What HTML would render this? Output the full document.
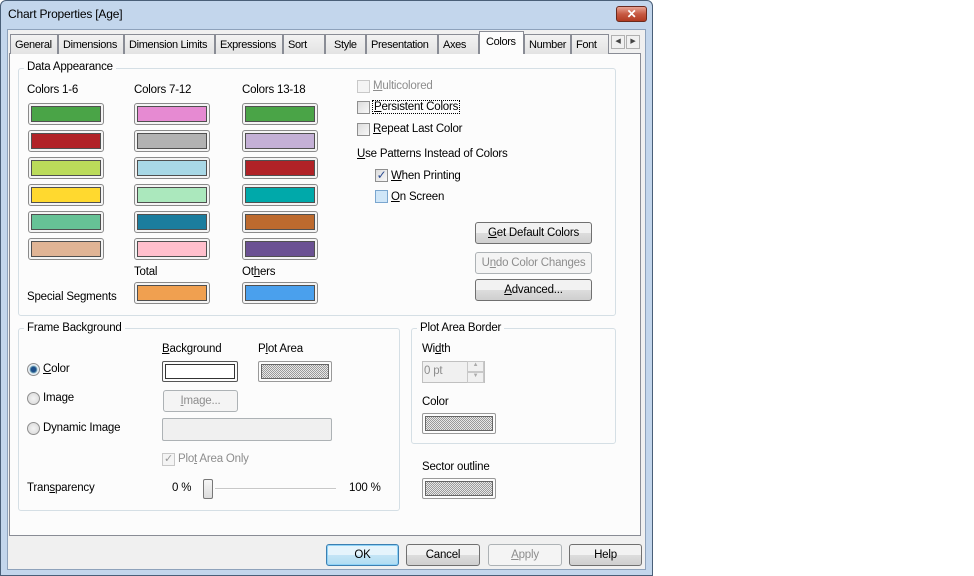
<!DOCTYPE html>
<html><head><style>
*{box-sizing:border-box}
body{margin:0;width:974px;height:576px;background:#fff;position:relative;overflow:hidden;font-family:"Liberation Sans",sans-serif;font-size:11.5px;letter-spacing:-0.2px;color:#000}
.a{position:absolute}
.win{left:0;top:0;width:653px;height:576px;background:#c3d6ec;border:1px solid #4a5f78;border-radius:6px 6px 0 0}
.body{left:7px;top:29px;width:639px;height:541px;background:#f0f0f0;border:1px solid #8ea2bb}
.panel{left:9px;top:53px;width:632px;height:483px;background:#fcfcfc;border:1px solid #898c95}
.tab{top:34px;height:20px;border:1px solid #898c95;border-bottom:none;background:linear-gradient(#f2f2f2,#e3e3e3);padding:4px 0 0 4px;white-space:nowrap;font-size:11px;letter-spacing:-0.35px;overflow:hidden}
.grp{border:1px solid #d5dfe5;border-radius:3px}
.lg{background:#fcfcfc;padding:0 3px}
.sw{width:76px;height:22px;border:1px solid #8a8a8a;border-radius:3px;background:#f4f4f4;padding:2px}
.sw div{width:100%;height:100%;border:1px solid #505050}
.cb{width:13px;height:13px;border:1px solid #8f8f8f;background:linear-gradient(135deg,#dcdcdc,#f8f8f8)}
.btn{height:22px;border:1px solid #707070;border-radius:3px;background:linear-gradient(#f2f2f2 50%,#dddddd 50%,#cfcfcf);text-align:center;line-height:20px}
.dis{color:#8d8d8d;border-color:#adb2b5;background:#f4f4f4}
.rad{width:13px;height:13px;border-radius:50%;border:1px solid #8f8f8f;background:radial-gradient(#f4f4f4,#d6d6d6)}
.hatch{background:repeating-conic-gradient(#9a9a9a 0 25%,#e8e8e8 0 50%) 0 0/2px 2px}
u{text-decoration:underline}
</style></head><body>
<div class="a win"></div>
<div class="a" style="left:8px;top:7px;font-size:12px">Chart Properties [Age]</div>
<div class="a" style="left:616px;top:6px;width:31px;height:16px;border:1px solid #6b2a1e;border-radius:3px;background:linear-gradient(#e8a493,#c75a43 50%,#b13b22);color:#fff;font-weight:bold;text-align:center;line-height:14px;font-size:12px">✕</div>
<div class="a body"></div>
<div class="a panel"></div>
<div class="a tab" style="left:10px;width:48px">General</div>
<div class="a tab" style="left:58px;width:66px">Dimensions</div>
<div class="a tab" style="left:124px;width:91px">Dimension Limits</div>
<div class="a tab" style="left:215px;width:68px">Expressions</div>
<div class="a tab" style="left:283px;width:42px">Sort</div>
<div class="a tab" style="left:325px;width:41px;padding-left:8px">Style</div>
<div class="a tab" style="left:366px;width:72px">Presentation</div>
<div class="a tab" style="left:438px;width:41px">Axes</div>
<div class="a tab" style="left:479px;top:31px;height:23px;width:45px;background:#fcfcfc;padding-left:6px">Colors</div>
<div class="a tab" style="left:524px;width:47px">Number</div>
<div class="a tab" style="left:571px;width:38px">Font</div>
<div class="a" style="left:611px;top:35px;width:14px;height:14px;border:1px solid #b0b0b0;font-size:7px;text-align:center;line-height:12px;color:#444">◀</div>
<div class="a" style="left:626px;top:35px;width:14px;height:14px;border:1px solid #b0b0b0;font-size:7px;text-align:center;line-height:12px;color:#444">▶</div>

<div class="a grp" style="left:18px;top:68px;width:598px;height:248px"></div>
<div class="a lg" style="left:24px;top:61px">Data Appearance</div>
<div class="a" style="left:27px;top:84px">Colors 1-6</div>
<div class="a" style="left:134px;top:84px">Colors 7-12</div>
<div class="a" style="left:242px;top:84px">Colors 13-18</div>

<div class="a sw" style="left:28px;top:103px"><div style="background:#4aa447"></div></div>
<div class="a sw" style="left:28px;top:130px"><div style="background:#b12227"></div></div>
<div class="a sw" style="left:28px;top:157px"><div style="background:#bbdb5a"></div></div>
<div class="a sw" style="left:28px;top:184px"><div style="background:#ffd92f"></div></div>
<div class="a sw" style="left:28px;top:211px"><div style="background:#66c296"></div></div>
<div class="a sw" style="left:28px;top:238px"><div style="background:#e0b495"></div></div>
<div class="a sw" style="left:134px;top:103px"><div style="background:#e68ad2"></div></div>
<div class="a sw" style="left:134px;top:130px"><div style="background:#b2b2b2"></div></div>
<div class="a sw" style="left:134px;top:157px"><div style="background:#a8d8e6"></div></div>
<div class="a sw" style="left:134px;top:184px"><div style="background:#abe8bd"></div></div>
<div class="a sw" style="left:134px;top:211px"><div style="background:#1b7d9e"></div></div>
<div class="a sw" style="left:134px;top:238px"><div style="background:#ffbfcc"></div></div>
<div class="a sw" style="left:242px;top:103px"><div style="background:#4aa447"></div></div>
<div class="a sw" style="left:242px;top:130px"><div style="background:#c4b0d6"></div></div>
<div class="a sw" style="left:242px;top:157px"><div style="background:#b12227"></div></div>
<div class="a sw" style="left:242px;top:184px"><div style="background:#00a9aa"></div></div>
<div class="a sw" style="left:242px;top:211px"><div style="background:#bd6a2e"></div></div>
<div class="a sw" style="left:242px;top:238px"><div style="background:#6b5193"></div></div>
<div class="a" style="left:134px;top:266px">Total</div>
<div class="a" style="left:242px;top:266px">Ot<u>h</u>ers</div>
<div class="a" style="left:27px;top:291px">Special Segments</div>
<div class="a sw" style="left:134px;top:282px"><div style="background:#f0a050"></div></div>
<div class="a sw" style="left:242px;top:282px"><div style="background:#4aa0ed"></div></div>

<div class="a cb" style="left:357px;top:80px;border-color:#c8c8c8;background:#f4f4f4"></div>
<div class="a" style="left:373px;top:80px;color:#8d8d8d"><u>M</u>ulticolored</div>
<div class="a cb" style="left:357px;top:101px"></div>
<div class="a" style="left:372px;top:100px;border:1px dotted #000;padding:0 1px"><u>P</u>ersistent Colors</div>
<div class="a cb" style="left:357px;top:123px"></div>
<div class="a" style="left:373px;top:123px"><u>R</u>epeat Last Color</div>
<div class="a" style="left:357px;top:148px"><u>U</u>se Patterns Instead of Colors</div>
<div class="a cb" style="left:375px;top:169px;font-size:12px;line-height:10px;color:#2a4a90;text-align:center">✓</div>
<div class="a" style="left:391px;top:170px"><u>W</u>hen Printing</div>
<div class="a cb" style="left:375px;top:190px;border-color:#7aa6cf;background:#cfe6f8"></div>
<div class="a" style="left:391px;top:191px"><u>O</u>n Screen</div>
<div class="a btn" style="left:475px;top:222px;width:117px"><u>G</u>et Default Colors</div>
<div class="a btn dis" style="left:475px;top:252px;width:117px">U<u>n</u>do Color Changes</div>
<div class="a btn" style="left:475px;top:279px;width:117px"><u>A</u>dvanced...</div>

<div class="a grp" style="left:18px;top:328px;width:382px;height:183px"></div>
<div class="a lg" style="left:24px;top:322px">Frame Background</div>
<div class="a" style="left:162px;top:343px"><u>B</u>ackground</div>
<div class="a" style="left:258px;top:343px">P<u>l</u>ot Area</div>
<div class="a rad" style="left:27px;top:363px;background:radial-gradient(#1e4f8a 30%,#7ab 45%,#e8eef4 55%)"></div>
<div class="a" style="left:43px;top:363px"><u>C</u>olor</div>
<div class="a" style="left:162px;top:361px;width:76px;height:21px;border:1px solid #555;border-radius:2px;padding:2px"><div style="height:100%;border:1px solid #333;background:#fff"></div></div>
<div class="a" style="left:258px;top:361px;width:74px;height:21px;border:1px solid #999;border-radius:2px;padding:2px"><div class="hatch" style="height:100%;border:1px solid #666"></div></div>
<div class="a rad" style="left:27px;top:392px"></div>
<div class="a" style="left:43px;top:392px">Image</div>
<div class="a btn dis" style="left:163px;top:390px;width:75px"><u>I</u>mage...</div>
<div class="a rad" style="left:27px;top:422px"></div>
<div class="a" style="left:43px;top:422px">Dynamic Image</div>
<div class="a" style="left:162px;top:418px;width:170px;height:23px;border:1px solid #adb2b5;border-radius:2px;background:#f0f0f0"></div>
<div class="a cb" style="left:162px;top:453px;border-color:#c8c8c8;background:#f4f4f4;color:#999;font-size:11px;line-height:10px;text-align:center">✓</div>
<div class="a" style="left:178px;top:453px;color:#8d8d8d">Plo<u>t</u> Area Only</div>
<div class="a" style="left:27px;top:482px">Tran<u>s</u>parency</div>
<div class="a" style="left:172px;top:482px">0 %</div>
<div class="a" style="left:215px;top:488px;width:121px;height:2px;background:#c8c8c8;border-bottom:1px solid #fff"></div>
<div class="a" style="left:203px;top:479px;width:10px;height:20px;border:1px solid #777;border-radius:2px;background:linear-gradient(#f6f6f6,#dcdcdc)"></div>
<div class="a" style="left:349px;top:482px">100 %</div>

<div class="a grp" style="left:411px;top:328px;width:205px;height:116px"></div>
<div class="a lg" style="left:417px;top:322px">Plot Area Border</div>
<div class="a" style="left:422px;top:343px">Wi<u>d</u>th</div>
<div class="a" style="left:422px;top:361px;width:63px;height:22px;border:1px solid #c0c0c0;background:#f0f0f0;color:#8d8d8d;padding:3px 1px">0 pt</div>
<div class="a" style="left:467px;top:361px;width:17px;height:11px;border:1px solid #c8c8c8;font-size:6px;color:#aaa;text-align:center">▲</div>
<div class="a" style="left:467px;top:372px;width:17px;height:11px;border:1px solid #c8c8c8;font-size:6px;color:#aaa;text-align:center">▼</div>
<div class="a" style="left:422px;top:396px">Color</div>
<div class="a" style="left:422px;top:413px;width:74px;height:21px;border:1px solid #999;border-radius:2px;padding:2px"><div class="hatch" style="height:100%;border:1px solid #666"></div></div>
<div class="a" style="left:422px;top:461px">Sector outline</div>
<div class="a" style="left:422px;top:478px;width:74px;height:21px;border:1px solid #999;border-radius:2px;padding:2px"><div class="hatch" style="height:100%;border:1px solid #666"></div></div>

<div class="a btn" style="left:326px;top:544px;width:73px;border-color:#3c7fb1;background:linear-gradient(#e5f4fc 50%,#c4e5f6 50%,#b0dcf2);box-shadow:inset 0 0 0 1px #8fd2f6">OK</div>
<div class="a btn" style="left:406px;top:544px;width:74px">Cancel</div>
<div class="a btn dis" style="left:488px;top:544px;width:74px"><u>A</u>pply</div>
<div class="a btn" style="left:569px;top:544px;width:73px">Help</div>
</body></html>
